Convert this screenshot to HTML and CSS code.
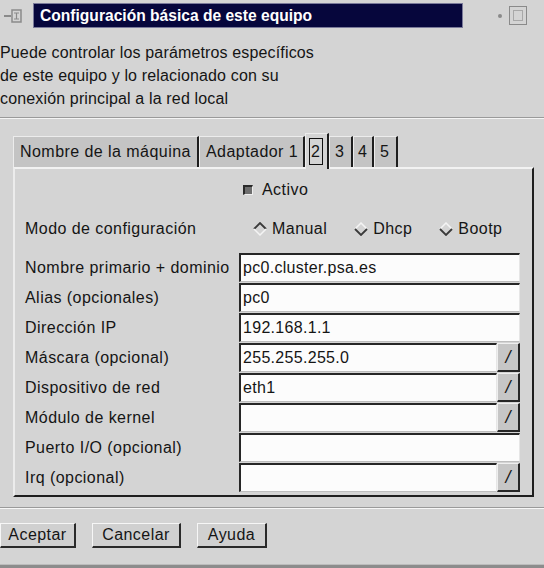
FILE: index.html
```html
<!DOCTYPE html>
<html lang="es">
<head>
<meta charset="utf-8">
<title>Configuración básica de este equipo</title>
<link rel="stylesheet" href="styles.css">
</head>
<body>
<div class="window">
  <div class="titlebar">
    <div class="win-icon">
      <svg width="20" height="16" viewBox="0 0 20 16">
        <path d="M1 8 H8" stroke="#8a8a8a" stroke-width="2" fill="none"/>
        <rect x="9" y="2" width="9" height="12" fill="none" stroke="#8a8a8a" stroke-width="1.5"/>
        <path d="M11 5 H16 M11 11 H16 M13.5 5 V11" stroke="#8a8a8a" stroke-width="1.2" fill="none"/>
      </svg>
    </div>
    <div class="title">Configuración básica de este equipo</div>
    <div class="win-controls">
      <span class="dot"></span>
      <span class="maxbox"><span class="maxbox-inner"></span></span>
    </div>
  </div>

  <div class="desc">Puede controlar los parámetros específicos<br>de este equipo y lo relacionado con su<br>conexión principal a la red local</div>
  <div class="sep"></div>

  <div class="tabs">
    <div class="tab t-name">Nombre de la máquina</div>
    <div class="tab t-adapt">Adaptador 1</div>
    <div class="tab t-num active"><span class="focus">2</span></div>
    <div class="tab t-num">3</div>
    <div class="tab t-num t-narrow">4</div>
    <div class="tab t-num">5</div>
  </div>

  <div class="panel">
    <div class="check-row"><span class="checkbox"></span><span>Activo</span></div>
    <div class="radio-row">
      <span class="label">Modo de configuración</span>
      <div class="radios">
        <span class="radio r-manual">
          <svg width="14" height="14" viewBox="0 0 14 14"><path d="M1 7 L7 1 L13 7" stroke="#3a3a3a" stroke-width="1.8" fill="none"/><path d="M1 7 L7 13 L13 7" stroke="#f4f4f4" stroke-width="1.5" fill="none"/></svg>
          Manual</span>
        <span class="radio r-dhcp">
          <svg width="14" height="14" viewBox="0 0 14 14"><path d="M1 7 L7 1 L13 7" stroke="#f4f4f4" stroke-width="1.5" fill="none"/><path d="M1 7 L7 13 L13 7" stroke="#3a3a3a" stroke-width="1.8" fill="none"/></svg>
          Dhcp</span>
        <span class="radio r-bootp">
          <svg width="14" height="14" viewBox="0 0 14 14"><path d="M1 7 L7 1 L13 7" stroke="#f4f4f4" stroke-width="1.5" fill="none"/><path d="M1 7 L7 13 L13 7" stroke="#3a3a3a" stroke-width="1.8" fill="none"/></svg>
          Bootp</span>
      </div>
    </div>

    <div class="fields">
      <span class="label">Nombre primario + dominio</span>
      <div class="field"><span class="input">pc0.cluster.psa.es</span></div>

      <span class="label">Alias (opcionales)</span>
      <div class="field"><span class="input">pc0</span></div>

      <span class="label">Dirección IP</span>
      <div class="field"><span class="input">192.168.1.1</span></div>

      <span class="label">Máscara (opcional)</span>
      <div class="field"><span class="input">255.255.255.0</span><span class="combo-btn">/</span></div>

      <span class="label">Dispositivo de red</span>
      <div class="field"><span class="input">eth1</span><span class="combo-btn">/</span></div>

      <span class="label">Módulo de kernel</span>
      <div class="field"><span class="input"></span><span class="combo-btn">/</span></div>

      <span class="label">Puerto I/O (opcional)</span>
      <div class="field"><span class="input"></span></div>

      <span class="label">Irq (opcional)</span>
      <div class="field"><span class="input"></span><span class="combo-btn">/</span></div>
    </div>
  </div>

  <div class="sep2"></div>

  <div class="buttons">
    <span class="btn b-ok">Aceptar</span>
    <span class="btn b-cancel">Cancelar</span>
    <span class="btn b-help">Ayuda</span>
  </div>
  <div class="bottom-edge"></div>
</div>
</body>
</html>
```

FILE: styles.css
```css
* { box-sizing: border-box; }

body {
  margin: 0;
  background: #d4d4d4;
  font-family: "Liberation Sans", Arial, sans-serif;
  font-size: 16px;
  color: #151515;
}

.window {
  width: 544px;
  height: 568px;
  overflow: hidden;
}

/* title bar */
.titlebar {
  height: 31px;
  display: flex;
  align-items: center;
}
.win-icon {
  width: 33px;
  padding-left: 3px;
  display: flex;
  align-items: center;
}
.title {
  width: 430px;
  height: 25px;
  background: #06063c;
  border: 1px solid #7a7a9a;
  color: #ffffff;
  font-weight: bold;
  font-size: 15.6px;
  line-height: 23px;
  padding-left: 6px;
  white-space: nowrap;
}
.win-controls {
  flex: 1;
  display: flex;
  align-items: center;
  padding-left: 35px;
  gap: 7px;
}
.dot {
  width: 4px;
  height: 4px;
  background: #8a8a8a;
  border-radius: 2px;
}
.maxbox {
  width: 18px;
  height: 19px;
  border: 1px solid #8a8a8a;
  display: flex;
  align-items: center;
  justify-content: center;
}
.maxbox-inner {
  width: 10px;
  height: 11px;
  border: 1px solid #a8a8a8;
}

/* description */
.desc {
  padding-top: 10px;
  line-height: 23px;
  letter-spacing: 0.15px;
  white-space: nowrap;
}
.sep {
  margin-top: 7px;
  border-top: 1px solid #9a9a9a;
  border-bottom: 1px solid #f4f4f4;
}

/* tabs */
.tabs {
  margin-top: 14px;
  height: 34px;
  padding-left: 13px;
  display: flex;
  align-items: flex-end;
}
.tab {
  height: 31px;
  background: #c4c4c4;
  border-top: 1px solid #ececec;
  border-left: 1px solid #ececec;
  border-right: 2px solid #1e1e1e;
  line-height: 29px;
  padding-left: 6px;
  letter-spacing: 0.45px;
  white-space: nowrap;
}
.t-name { width: 186px; }
.t-adapt { width: 106px; padding-left: 6px; }
.t-num { width: 24px; padding-left: 5px; }
.t-narrow { width: 21px; padding-left: 4px; }
.tab.active {
  height: 36px;
  margin-bottom: -2px;
  background: #d4d4d4;
  position: relative;
  padding-left: 3px;
  padding-top: 4px;
}
.focus {
  display: block;
  width: 14px;
  height: 27px;
  border: 1px solid #111;
  line-height: 25px;
  padding-left: 1px;
}

/* panel */
.panel {
  margin-left: 13px;
  width: 521px;
  height: 330px;
  border-top: 2px solid #f2f2f2;
  border-left: 2px solid #ececec;
  border-right: 2px solid #1e1e1e;
  border-bottom: 2px solid #1e1e1e;
  padding: 10px 12px 2px 10px;
}
.label {
  letter-spacing: 0.45px;
  white-space: nowrap;
}
.check-row {
  height: 22px;
  display: flex;
  align-items: center;
  padding-left: 218px;
  gap: 9px;
  letter-spacing: 0.45px;
}
.checkbox {
  width: 10px;
  height: 10px;
  background: #6e6e6e;
  border-top: 2px solid #2a2a2a;
  border-left: 2px solid #2a2a2a;
  border-right: 1px solid #eeeeee;
  border-bottom: 1px solid #eeeeee;
}
.radio-row {
  margin-top: 17px;
  height: 22px;
  display: flex;
  align-items: center;
}
.radio-row .label { width: 228px; }
.radios {
  display: flex;
  align-items: center;
  gap: 27px;
  letter-spacing: 0.45px;
}
.radio {
  display: flex;
  align-items: center;
  gap: 5px;
}

.fields {
  margin-top: 13px;
  display: grid;
  grid-template-columns: 214px 1fr;
  grid-auto-rows: 30px;
}
.fields .label {
  line-height: 29px;
}
.field {
  display: flex;
  height: 29px;
}
.input {
  flex: 1;
  background: #fcfcfc;
  border-top: 2px solid #262626;
  border-left: 2px solid #262626;
  border-bottom: 1px solid #bdbdbd;
  border-right: 1px solid #e6e6e6;
  padding-left: 2px;
  line-height: 25px;
  letter-spacing: 0.3px;
  white-space: nowrap;
}
.combo-btn {
  width: 23px;
  background: #c6c6c6;
  border-top: 1px solid #efefef;
  border-left: 1px solid #efefef;
  border-right: 2px solid #262626;
  border-bottom: 2px solid #262626;
  text-align: center;
  line-height: 26px;
  font-size: 18px;
  font-style: italic;
}

/* bottom */
.sep2 {
  margin-top: 10px;
  border-top: 1px solid #9a9a9a;
  border-bottom: 1px solid #f6f6f6;
}
.buttons {
  margin-top: 14px;
  display: flex;
  gap: 16px;
}
.btn {
  height: 25px;
  background: #d0d0d0;
  border-top: 1px solid #f6f6f6;
  border-left: 1px solid #f6f6f6;
  border-right: 2px solid #2a2a2a;
  border-bottom: 2px solid #2a2a2a;
  text-align: center;
  line-height: 22px;
  letter-spacing: 0.45px;
}
.b-ok { width: 76px; }
.b-cancel { width: 89px; }
.b-help { width: 70px; }
.bottom-edge {
  margin-top: 16px;
  height: 4px;
  background: #8c8c8c;
  border-top: 1px solid #bcbcbc;
}
```
